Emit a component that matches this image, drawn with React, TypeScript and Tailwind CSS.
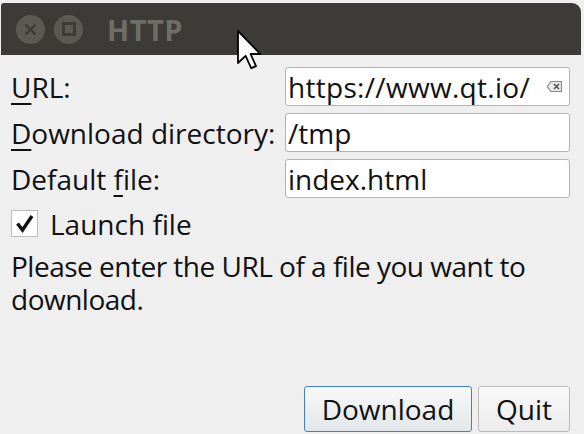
import React from 'react'

const font = { fontFamily: '"Open Sans", "Noto Sans", sans-serif' }

function Cursor() {
  return (
    <svg className="absolute left-[236px] top-[29px]" width="28" height="42" viewBox="0 0 14 21">
      <path
        d="M1 1 L1 17 L4.8 13.4 L7.6 19.6 L10 18.6 L7.3 12.5 L12.2 12.5 Z"
        fill="#fff"
        stroke="#000"
        strokeWidth="0.9"
        strokeLinejoin="round"
      />
    </svg>
  )
}

function ClearIcon() {
  return (
    <svg width="17" height="13" viewBox="0 0 17 13">
      <path d="M5 1.5 L15.5 1.5 L15.5 11.5 L5 11.5 L1.2 6.5 Z" fill="#e8e8e8" stroke="#8a8a8a" strokeWidth="1.2" />
      <path d="M8 4 L13 9 M13 4 L8 9" stroke="#555" strokeWidth="1.6" />
    </svg>
  )
}

export default function App() {
  return (
    <div className="relative w-[584px] h-[434px] bg-[#efefef] overflow-hidden text-[#111] text-[28px] leading-none" style={font}>
      {/* title bar */}
      <div className="mt-[3px] ml-px w-[580px] h-[52px] bg-[#3c3b37] rounded-tr-[9px] rounded-tl-[3px] flex items-center">
        <div className="ml-[15px] w-[29px] h-[29px] rounded-full bg-[#5a5954] flex items-center justify-center">
          <svg width="13" height="13" viewBox="0 0 13 13">
            <path d="M1.5 1.5 L11.5 11.5 M11.5 1.5 L1.5 11.5" stroke="#3c3b37" strokeWidth="2.4" />
          </svg>
        </div>
        <div className="ml-[9px] w-[29px] h-[29px] rounded-full bg-[#5a5954] flex items-center justify-center">
          <div className="w-[14px] h-[14px] border-[3px] border-[#3c3b37]" />
        </div>
        <div className="ml-[24px] text-[29px] font-bold text-[#6e6d68] tracking-[0.5px]">
          HTTP
        </div>
      </div>

      <div className="flex flex-col h-[379px] pl-[11px] pr-[14px]">
        {/* form */}
        <div className="grid grid-cols-[274px_285px] gap-y-[7px] mt-[12px]">
          <label className="flex items-center h-[39px] whitespace-nowrap">
            <span className="underline decoration-2 underline-offset-[5px]">U</span>RL:
          </label>
          <div className="h-[39px] bg-white border border-[#b4b4b4] rounded-[3px] flex items-center pl-[2px] pr-[6px]">
            <span className="flex-1 tracking-[0.3px]">https://www.qt.io/</span>
            <ClearIcon />
          </div>

          <label className="flex items-center h-[39px] whitespace-nowrap">
            <span className="underline decoration-2 underline-offset-[5px]">D</span>ownload directory:
          </label>
          <div className="h-[39px] bg-white border border-[#b4b4b4] rounded-[3px] flex items-center pl-[2px]">
            /tmp
          </div>

          <label className="flex items-center h-[39px] whitespace-nowrap">
            Default&nbsp;<span className="underline decoration-2 underline-offset-[5px]">f</span>ile:
          </label>
          <div className="h-[39px] bg-white border border-[#b4b4b4] rounded-[3px] flex items-center pl-[2px]">
            index.html
          </div>
        </div>

        {/* checkbox */}
        <div className="flex items-center gap-[12px] mt-[12px] h-[27px]">
          <div className="w-[27px] h-[27px] bg-white border border-[#bdbdbd] flex items-center justify-center">
            <svg width="20" height="19" viewBox="0 0 20 19">
              <path d="M2.5 9.5 L7.5 16 L17 2" fill="none" stroke="#111" strokeWidth="3.4" strokeLinejoin="miter" />
            </svg>
          </div>
          <span>Launch file</span>
        </div>

        <p className="mt-[13px] leading-[33px] w-[540px] tracking-[-0.5px]">
          Please enter the URL of a file you want to download.
        </p>

        {/* buttons */}
        <div className="mt-auto mb-[2px] flex justify-end gap-[6px]">
          <button className="h-[46px] w-[168px] rounded-[3px] border border-[#3f80c4] bg-gradient-to-b from-[#f8f8f8] to-[#e3e7ea]">
            Download
          </button>
          <button className="h-[46px] w-[92px] rounded-[3px] border border-[#b9b9b9] bg-gradient-to-b from-[#fafafa] to-[#ebebeb]">
            Quit
          </button>
        </div>
      </div>

      <Cursor />
    </div>
  )
}
